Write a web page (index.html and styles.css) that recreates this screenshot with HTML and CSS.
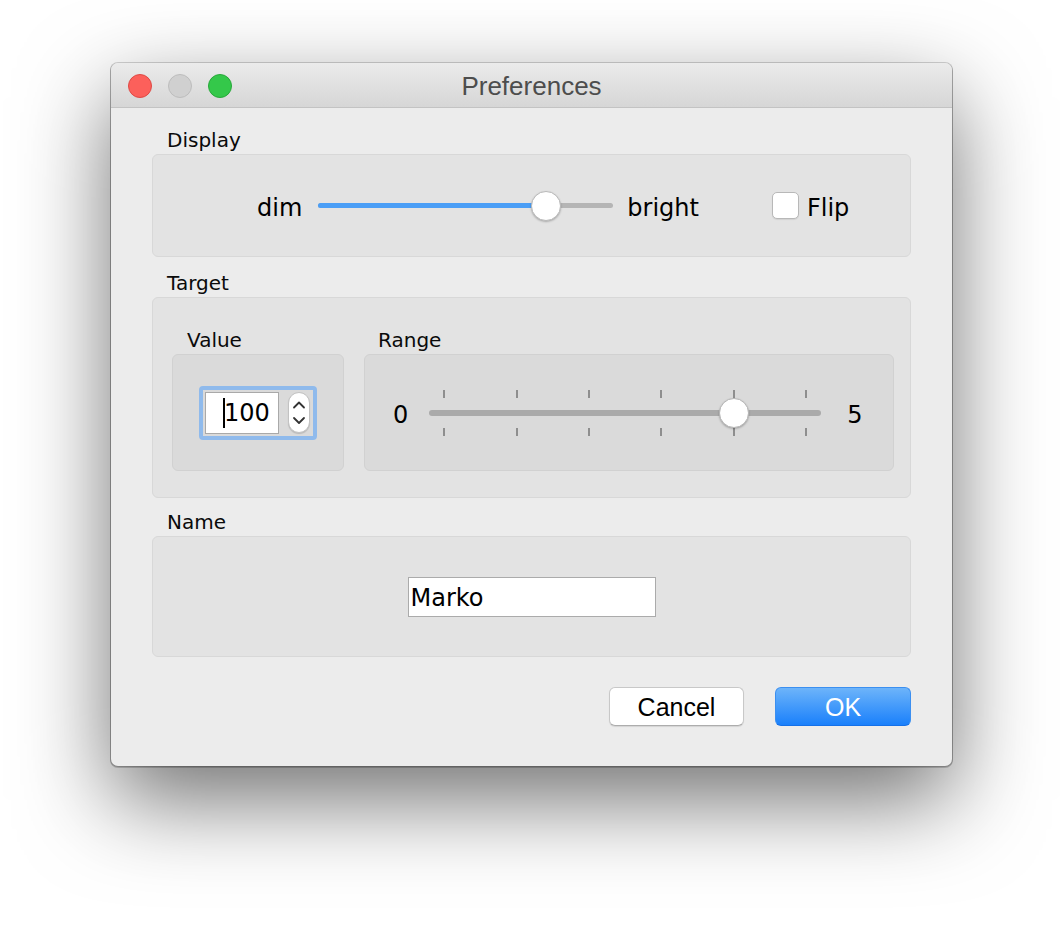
FILE: index.html
```html
<!DOCTYPE html>
<html>
<head>
<meta charset="utf-8">
<title>Preferences</title>
<link rel="stylesheet" href="styles.css">
</head>
<body>
<div class="window">
  <div class="titlebar">
    <div class="lights">
      <span class="light red"></span>
      <span class="light gray"></span>
      <span class="light green"></span>
    </div>
    <div class="title">Preferences</div>
    <div></div>
  </div>
  <div class="content">
    <div class="group-title">Display</div>
    <div class="group display">
      <span class="text dim-label">dim</span>
      <div class="hslider">
        <div class="track">
          <div class="fill" style="width:77.3%"></div>
          <div class="knob" style="left:77.3%"></div>
        </div>
      </div>
      <span class="text bright-label">bright</span>
      <span class="checkbox"></span>
      <span class="text flip-label">Flip</span>
    </div>

    <div class="group-title">Target</div>
    <div class="group target">
      <div class="sub">
        <div class="group-title">Value</div>
        <div class="subgroup value-box">
          <div class="focus-ring">
            <div class="num-field"><span class="caret"></span><span>100</span></div>
            <div class="stepper">
              <svg viewBox="0 0 20 39" width="20" height="39"><path d="M5 14.5 L10 9.5 L15 14.5 M5 25 L10 30 L15 25" fill="none" stroke="#333" stroke-width="1.8" stroke-linecap="round" stroke-linejoin="round"/></svg>
            </div>
          </div>
        </div>
      </div>
      <div class="sub">
        <div class="group-title range-title">Range</div>
        <div class="subgroup range-box">
          <span class="text rnum">0</span>
          <div class="rslider">
            <div class="ticks"><span class="tick"></span><span class="tick"></span><span class="tick"></span><span class="tick"></span><span class="tick"></span><span class="tick"></span></div>
            <div class="rtrack-wrap">
              <div class="rtrack"></div>
              <div class="rknob" style="left:calc(15px + (100% - 30px) * 0.8)"></div>
            </div>
            <div class="ticks"><span class="tick"></span><span class="tick"></span><span class="tick"></span><span class="tick"></span><span class="tick"></span><span class="tick"></span></div>
          </div>
          <span class="text rnum rnum-max">5</span>
        </div>
      </div>
    </div>

    <div class="group-title name-title">Name</div>
    <div class="group name">
      <div class="text-field">Marko</div>
    </div>

    <div class="buttons">
      <button class="btn cancel">Cancel</button>
      <button class="btn ok">OK</button>
    </div>
  </div>
</div>
</body>
</html>
```

FILE: styles.css
```css
* { box-sizing: border-box; }
html, body { margin: 0; padding: 0; background: #ffffff; }
body {
  width: 1064px;
  height: 926px;
  overflow: hidden;
  padding: 63px 0 0 111px;
  font-family: "DejaVu Sans", sans-serif;
  color: #000;
}

.window {
  width: 841px;
  height: 703px;
  background: #ececec;
  border-radius: 7px;
  overflow: hidden;
  box-shadow:
    0 0 0 1px rgba(0,0,0,0.17),
    0 1px 0 1px rgba(0,0,0,0.18),
    0 34px 90px rgba(0,0,0,0.56);
  display: flex;
  flex-direction: column;
}

/* title bar */
.titlebar {
  height: 45px;
  flex: none;
  border-bottom: 1px solid #c3c3c3;
  background: linear-gradient(#ebebeb, #d6d6d6);
  display: grid;
  grid-template-columns: 1fr auto 1fr;
  align-items: center;
}
.lights { display: flex; gap: 16px; padding-left: 17px; padding-top: 1px; }
.light { width: 24px; height: 24px; border-radius: 50%; display: block; }
.light.red { background: #fc605b; border: 1px solid #de4a45; }
.light.gray { background: #d0d0d0; border: 1px solid #bdbdbd; }
.light.green { background: #34c84a; border: 1px solid #28a83a; }
.title {
  font-family: "Liberation Sans", Arial, sans-serif;
  font-size: 26px;
  line-height: 1;
  color: #4d4d4d;
  padding-top: 2px;
}

/* content */
.content { padding: 6px 41px 0 41px; }

.group-title {
  height: 40px;
  padding: 13px 0 0 15px;
  font-size: 20px;
  line-height: 26px;
  color: #0a0a0a;
}
.group-title.name-title { height: 38px; padding-top: 11px; }
.group-title.range-title { padding-left: 14px; }

.group {
  background: #e3e3e3;
  border: 1px solid #d8d8d8;
  border-radius: 6px;
}

.text { font-size: 24px; line-height: 28px; }

/* display */
.display {
  height: 103px;
  display: flex;
  align-items: center;
  padding-left: 104px;
}
.display .text { margin-top: 4px; }
.hslider {
  width: 295px;
  height: 30px;
  margin-left: 16px;
  display: flex;
  align-items: center;
}
.track {
  position: relative;
  width: 100%;
  height: 5px;
  border-radius: 3px;
  background: #b5b5b5;
}
.fill {
  position: absolute;
  left: 0; top: 0; bottom: 0;
  border-radius: 3px;
  background: #4a9ef6;
}
.knob {
  position: absolute;
  top: 50%;
  width: 30px;
  height: 30px;
  border-radius: 50%;
  background: #fff;
  border: 1px solid #b9b9b9;
  box-shadow: 0 1px 2px rgba(0,0,0,0.25);
  transform: translate(-50%, -50%);
}
.bright-label { margin-left: 14px; }
.checkbox {
  width: 27px;
  height: 27px;
  margin-left: 73px;
  border-radius: 5px;
  background: #fff;
  border: 1px solid #b8b8b8;
  box-shadow: 0 1px 1px rgba(0,0,0,0.08);
}
.flip-label { margin-left: 8px; }

/* target */
.target {
  height: 201px;
  padding: 16px 16px 26px 19px;
  display: grid;
  grid-template-columns: 172px 530px;
  column-gap: 20px;
}
.subgroup {
  height: 117px;
  background: #dadada;
  border: 1px solid #d1d1d1;
  border-radius: 6px;
}
.value-box {
  display: flex;
  align-items: center;
  justify-content: center;
}
.focus-ring {
  display: flex;
  align-items: center;
  gap: 9px;
  border: 4px solid #8fbaec;
  border-radius: 4px;
  padding: 2px 3px 2px 2px;
}
.num-field {
  width: 74px;
  height: 42px;
  background: #fff;
  border: 1px solid #a9a9a9;
  display: flex;
  align-items: center;
  padding-left: 17px;
  font-size: 24px;
}
.caret {
  width: 2px;
  height: 30px;
  background: #000;
  margin-right: -1px;
}
.stepper {
  width: 22px;
  height: 41px;
  border-radius: 11px;
  background: #fff;
  border: 1px solid #c2c2c2;
  box-shadow: 0 1px 1px rgba(0,0,0,0.15);
  display: flex;
}
.stepper svg { display: block; }

.range-box {
  display: flex;
  align-items: center;
  padding-left: 28px;
}
.rslider {
  width: 392px;
  margin-left: 21px;
  display: flex;
  flex-direction: column;
}
.ticks {
  height: 8px;
  display: flex;
  justify-content: space-between;
  padding: 0 14px;
}
.tick { width: 2px; height: 8px; background: #8e8e8e; display: block; }
.rtrack-wrap {
  position: relative;
  height: 30px;
  display: flex;
  align-items: center;
}
.rtrack {
  width: 100%;
  height: 6px;
  border-radius: 3px;
  background: #aaaaaa;
}
.rknob {
  position: absolute;
  top: 0;
  width: 30px;
  height: 30px;
  border-radius: 50%;
  background: #fff;
  border: 1px solid #b5b5b5;
  box-shadow: 0 1px 2px rgba(0,0,0,0.25);
  transform: translateX(-50%);
}
.rnum { margin-top: 4px; }
.rnum-max { margin-left: 26px; }

/* name */
.name {
  height: 121px;
  display: flex;
  align-items: center;
  justify-content: center;
}
.text-field {
  width: 248px;
  height: 40px;
  background: #fff;
  border: 1px solid #ababab;
  display: flex;
  align-items: center;
  padding: 2px 0 0 2px;
  font-size: 24px;
}

/* buttons */
.buttons {
  display: flex;
  justify-content: flex-end;
  gap: 31px;
  margin-top: 30px;
}
.btn {
  height: 39px;
  border-radius: 6px;
  font-family: "Liberation Sans", Arial, sans-serif;
  font-size: 25px;
  line-height: 1;
  padding: 1px 0 0 0;
  margin: 0;
}
.btn.cancel {
  width: 135px;
  background: #fff;
  color: #000;
  border: 1px solid #c8c8c8;
  border-bottom-color: #adadad;
  box-shadow: 0 1px 1px rgba(0,0,0,0.1);
}
.btn.ok {
  width: 136px;
  color: #fff;
  background: linear-gradient(#6db4fa, #1a80fb);
  border: 1px solid #3b8ff0;
  border-bottom-color: #1470e8;
}
```
